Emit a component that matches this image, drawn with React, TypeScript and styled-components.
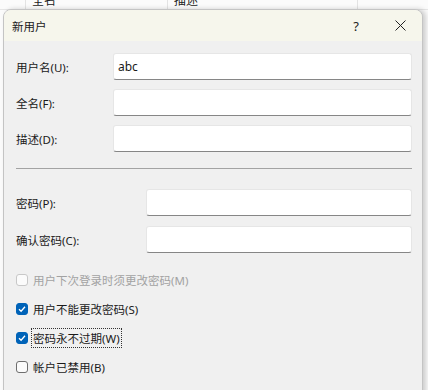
import React from 'react';
import styled, { createGlobalStyle } from 'styled-components';

const GlobalStyle = createGlobalStyle`
  html, body {
    margin: 0;
    padding: 0;
    background: #fbfbfb;
    font-family: "Noto Sans", "Noto Sans CJK SC", sans-serif;
  }
`;

const Desktop = styled.div`
  position: relative;
  width: 428px;
  height: 390px;
  overflow: hidden;
  background: #fbfbfb;
`;

const ListHeader = styled.div`
  display: flex;
  height: 9px;
  overflow: hidden;
  border-bottom: 1px solid #e6e6e6;
  background: #fbfbfb;
`;

const HeaderCell = styled.div<{ $w: number }>`
  width: ${(p) => p.$w}px;
  flex-shrink: 0;
  border-left: 1px solid #e3e3e3;
  padding-left: 6px;
  box-sizing: border-box;
  font-size: 12px;
  line-height: 12px;
  margin-top: -5px;
  color: #222;
`;

const Dialog = styled.div`
  position: absolute;
  top: 9px;
  left: 3px;
  width: 418px;
  height: 395px;
  background: #f0f0f0;
  border: 1px solid #c4c4c4;
  border-radius: 8px 8px 0 0;
  box-shadow: 3px 0 5px rgba(0, 0, 0, 0.18);
  display: flex;
  flex-direction: column;
  overflow: hidden;
`;

const TitleBar = styled.div`
  height: 31px;
  display: flex;
  align-items: center;
  padding: 0 0 0 8px;
  background: #f6f6ec;
  color: #1a1a1a;
  font-size: 11.5px;
`;

const Title = styled.div`
  flex: 1;
`;

const TitleButton = styled.div`
  width: 44px;
  height: 31px;
  display: flex;
  align-items: center;
  justify-content: center;
  color: #222;
  font-size: 13px;
`;

const Body = styled.div`
  padding: 12px 10px 0 12px;
  display: flex;
  flex-direction: column;
  color: #1a1a1a;
  font-size: 11.5px;
`;

const FieldGroup = styled.div`
  display: flex;
  flex-direction: column;
  gap: 9px;
`;

const Row = styled.div<{ $labelWidth: number }>`
  display: grid;
  grid-template-columns: ${(p) => p.$labelWidth}px 1fr;
  align-items: center;
`;

const Label = styled.label`
  white-space: nowrap;
`;

const Input = styled.div`
  height: 27px;
  box-sizing: border-box;
  background: #fff;
  border: 1px solid #e6e6e6;
  border-bottom: 1px solid #868686;
  border-radius: 3px;
  padding: 0 4px;
  display: flex;
  align-items: center;
  font-size: 12px;
  color: #1a1a1a;
`;

const Separator = styled.div`
  height: 1px;
  background: #a3a3a3;
  margin: 16px 0 20px;
`;

const CheckList = styled.div`
  display: flex;
  flex-direction: column;
  gap: 9px;
  margin-top: 17px;
`;

const CheckRow = styled.div<{ $disabled?: boolean }>`
  height: 20px;
  display: flex;
  align-items: center;
  gap: 3px;
  color: ${(p) => (p.$disabled ? '#a2a2a2' : '#1a1a1a')};
`;

const Box = styled.span<{ $checked?: boolean; $disabled?: boolean }>`
  width: 12px;
  height: 12px;
  box-sizing: border-box;
  border-radius: 3px;
  display: inline-flex;
  align-items: center;
  justify-content: center;
  background: ${(p) => (p.$checked ? '#0063b8' : '#fbfbfb')};
  border: 1px solid
    ${(p) => (p.$checked ? '#0063b8' : p.$disabled ? '#c8c8c8' : '#6e6e6e')};
`;

const CheckText = styled.span<{ $focused?: boolean }>`
  padding: 1px 1px;
  border: 1px dotted ${(p) => (p.$focused ? '#333' : 'transparent')};
`;

const Check = () => (
  <svg width="8" height="8" viewBox="0 0 8 8">
    <path d="M1 4.2 L3.1 6.2 L7 1.8" fill="none" stroke="#fff" strokeWidth="1.3" />
  </svg>
);

const CheckItem = ({
  text,
  checked,
  disabled,
  focused,
}: {
  text: string;
  checked?: boolean;
  disabled?: boolean;
  focused?: boolean;
}) => (
  <CheckRow $disabled={disabled}>
    <Box $checked={checked} $disabled={disabled}>
      {checked && <Check />}
    </Box>
    <CheckText $focused={focused}>{text}</CheckText>
  </CheckRow>
);

const App = () => {
  return (
    <>
      <GlobalStyle />
      <Desktop>
        <ListHeader>
          <HeaderCell $w={25} style={{ borderLeft: 'none' }} />
          <HeaderCell $w={142}>全名</HeaderCell>
          <HeaderCell $w={190}>描述</HeaderCell>
          <HeaderCell $w={71} />
        </ListHeader>
        <Dialog>
          <TitleBar>
            <Title>新用户</Title>
            <TitleButton>?</TitleButton>
            <TitleButton>
              <svg width="11" height="11" viewBox="0 0 11 11">
                <path d="M0.5 0.5 L10.5 10.5 M10.5 0.5 L0.5 10.5" stroke="#222" strokeWidth="1" />
              </svg>
            </TitleButton>
          </TitleBar>
          <Body>
            <FieldGroup>
              <Row $labelWidth={97}>
                <Label>用户名(U):</Label>
                <Input>abc</Input>
              </Row>
              <Row $labelWidth={97}>
                <Label>全名(F):</Label>
                <Input />
              </Row>
              <Row $labelWidth={97}>
                <Label>描述(D):</Label>
                <Input />
              </Row>
            </FieldGroup>
            <Separator />
            <FieldGroup style={{ gap: 10 }}>
              <Row $labelWidth={130}>
                <Label>密码(P):</Label>
                <Input />
              </Row>
              <Row $labelWidth={130}>
                <Label>确认密码(C):</Label>
                <Input />
              </Row>
            </FieldGroup>
            <CheckList>
              <CheckItem text="用户下次登录时须更改密码(M)" disabled />
              <CheckItem text="用户不能更改密码(S)" checked />
              <CheckItem text="密码永不过期(W)" checked focused />
              <CheckItem text="帐户已禁用(B)" />
            </CheckList>
          </Body>
        </Dialog>
      </Desktop>
    </>
  );
};

export default App;
